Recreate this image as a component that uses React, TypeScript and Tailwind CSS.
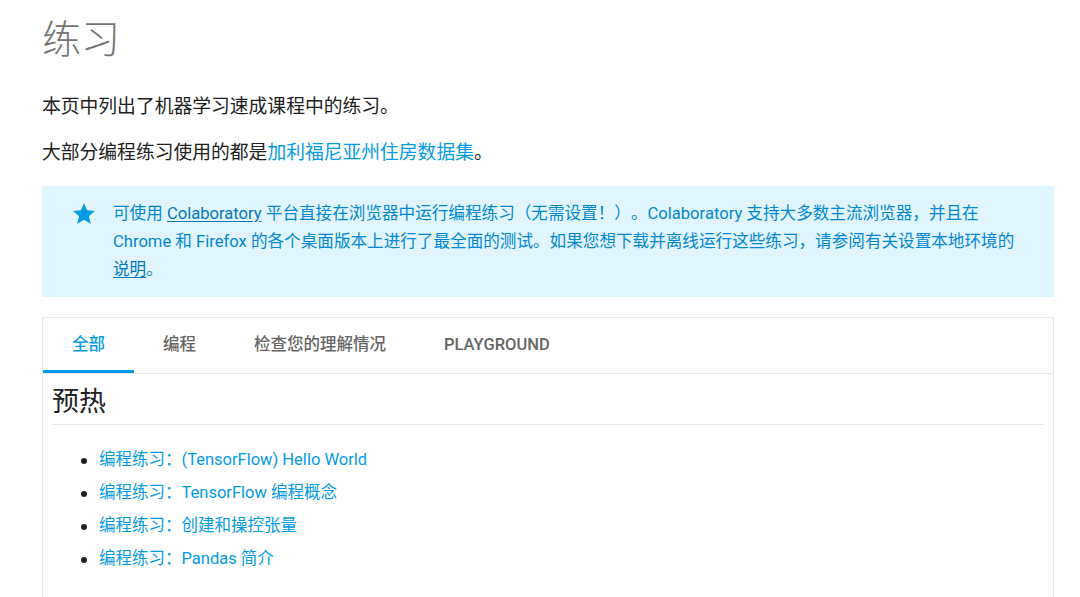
import React from "react";

const font = { fontFamily: 'Roboto, "Noto Sans CJK SC", "Noto Sans", sans-serif' };

export default function App() {
  const items = [
    "编程练习：(TensorFlow) Hello World",
    "编程练习：TensorFlow 编程概念",
    "编程练习：创建和操控张量",
    "编程练习：Pandas 简介",
  ];
  return (
    <div className="w-[1080px] h-[597px] overflow-hidden bg-white [text-spacing-trim:space-all]" style={font}>
      <div className="ml-[42px] w-[1012px] pt-[16px]">
        <h1 className="text-[39px] leading-[48px] font-light text-[#757575]">练习</h1>
        <p className="mt-[29px] text-[18.8px] leading-[28px] text-[#212121]">本页中列出了机器学习速成课程中的练习。</p>
        <p className="mt-[18px] text-[18.8px] leading-[28px] text-[#212121]">
          大部分编程练习使用的都是<span className="text-[#039be5]">加利福尼亚州住房数据集</span>。
        </p>

        <div className="mt-[19px] h-[111px] bg-[#e1f5fe] flex pl-[29px] pt-[14px]">
          <svg width="26" height="26" viewBox="0 0 24 24" className="shrink-0 mt-[1px]">
            <path fill="#039be5" d="M12 17.27L18.18 21l-1.64-7.03L22 9.24l-7.19-.61L12 2 9.19 8.63 2 9.24l5.46 4.73L5.82 21z" />
          </svg>
          <div className="ml-[16px] text-[16.6px] leading-[28px] text-[#0288d1] whitespace-nowrap">
            可使用 <span className="underline underline-offset-2 text-[#0277bd]">Colaboratory</span> 平台直接在浏览器中运行编程练习（无需设置！）。Colaboratory 支持大多数主流浏览器，并且在
            <br />
            Chrome 和 Firefox 的各个桌面版本上进行了最全面的测试。如果您想下载并离线运行这些练习，请参阅有关设置本地环境的
            <br />
            <span className="underline underline-offset-2 text-[#0277bd]">说明</span>。
          </div>
        </div>

        <div className="mt-[20px] border border-[#e8e8e8] h-[300px]">
          <div className="flex h-[56px] border-b border-[#e6e6e6] text-[16.5px]">
            <div className="px-[29px] flex items-center text-[#039be5] border-b-[3px] border-[#039be5] pt-[3px] font-medium">全部</div>
            <div className="px-[29px] flex items-center text-[#666666] font-medium">编程</div>
            <div className="px-[29px] flex items-center text-[#666666] font-medium">检查您的理解情况</div>
            <div className="px-[29px] flex items-center text-[#666666] font-medium">PLAYGROUND</div>
          </div>
          <div className="px-[9px]">
            <h2 className="pt-[12px] pb-[6px] text-[27px] leading-[32px] text-[#212121] border-b border-[#e6e6e6]">预热</h2>
            <ul className="mt-[19px] pl-[29px]">
              {items.map((t) => (
                <li key={t} className="flex items-center h-[33px]">
                  <span className="w-[6px] h-[6px] rounded-full bg-[#212121] shrink-0" />
                  <span className="ml-[12px] text-[16.5px] text-[#039be5]">{t}</span>
                </li>
              ))}
            </ul>
          </div>
        </div>
      </div>
    </div>
  );
}
